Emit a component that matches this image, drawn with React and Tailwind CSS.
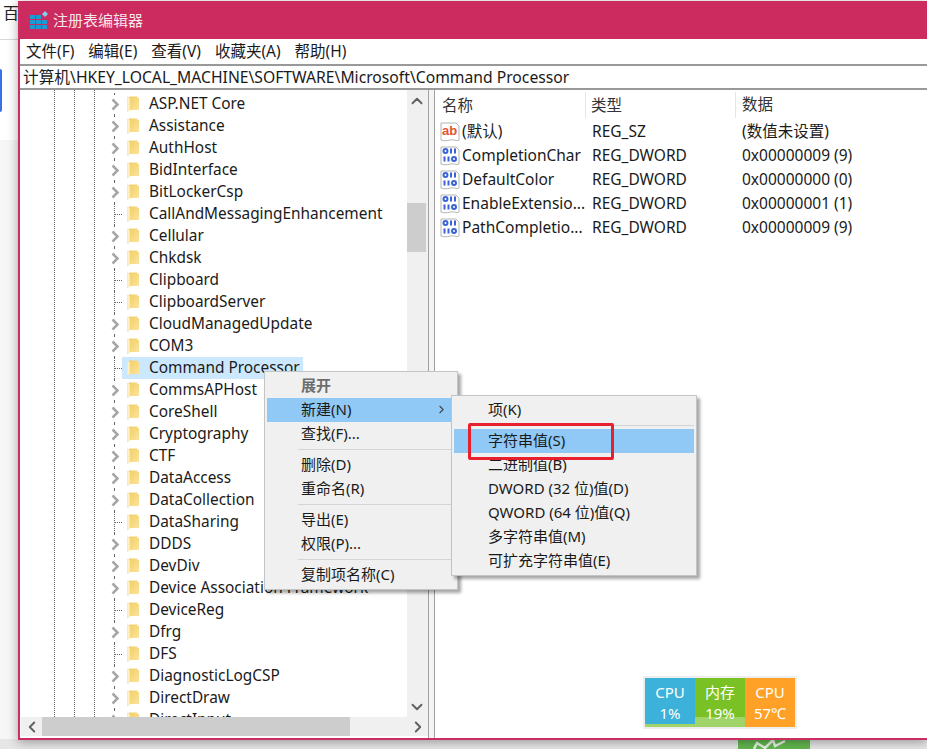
import { ChevronRight, ChevronLeft, ChevronUp, ChevronDown } from 'lucide-react';

const FONT = '"Noto Sans", "Noto Sans CJK SC", sans-serif';

const KEYS = ['ASP.NET Core', 'Assistance', 'AuthHost', 'BidInterface', 'BitLockerCsp', 'CallAndMessagingEnhancement', 'Cellular', 'Chkdsk', 'Clipboard', 'ClipboardServer', 'CloudManagedUpdate', 'COM3', 'Command Processor', 'CommsAPHost', 'CoreShell', 'Cryptography', 'CTF', 'DataAccess', 'DataCollection', 'DataSharing', 'DDDS', 'DevDiv', 'Device Association Framework', 'DeviceReg', 'Dfrg', 'DFS', 'DiagnosticLogCSP', 'DirectDraw', 'DirectInput'];
const LEAVES = ['CallAndMessagingEnhancement', 'Clipboard', 'ClipboardServer', 'Command Processor', 'DataSharing', 'DeviceReg', 'DFS'];

const VALUES = [
  { name: '(默认)', type: 'REG_SZ', data: '(数值未设置)', icon: 'sz' },
  { name: 'CompletionChar', type: 'REG_DWORD', data: '0x00000009 (9)' },
  { name: 'DefaultColor', type: 'REG_DWORD', data: '0x00000000 (0)' },
  { name: 'EnableExtensio...', type: 'REG_DWORD', data: '0x00000001 (1)' },
  { name: 'PathCompletio...', type: 'REG_DWORD', data: '0x00000009 (9)' },
];

const Folder = () => (
  <svg width="12" height="16" viewBox="0 0 12 16" className="shrink-0">
    <defs>
      <linearGradient id="folderBody" x1="0" y1="0" x2="1" y2="1">
        <stop offset="0" stopColor="#f3cd66" />
        <stop offset="1" stopColor="#fbe49a" />
      </linearGradient>
    </defs>
    <path d="M2 0.500h8.500v1.500h1.500v12H2z" fill="url(#folderBody)" />
    <path d="M0 1l3 1v12l-3 2z" fill="#fdf0c4" stroke="#ecd48c" strokeWidth="0.400" />
  </svg>
);

const RegIcon = ({ type }) => (
  <svg width="20" height="20" viewBox="0 0 20 20" className="shrink-0">
    <path d="M1 1h15l3 3v14c-3 1.500-5-1-9 0s-6 1-9 0z" fill="#fff" stroke="#b4b4b4" />
    {type === 'sz' ? (
      <text x="2" y="12.500" fontSize="13" fontWeight="700" fill="#e4532f" fontFamily="Liberation Sans, sans-serif">ab</text>
    ) : (
      <g fill="none" stroke="#3a62d8" strokeWidth="2">
        <circle cx="5.500" cy="5" r="2" />
        <path d="M11 2.500v5M15 2.500v5M4.500 10.500v5M8.500 10.500v5" />
        <circle cx="14" cy="13" r="2" />
      </g>
    )}
  </svg>
);

const TreeRow = ({ name }) => {
  const leaf = LEAVES.includes(name);
  const selected = name === 'Command Processor';
  return (
    <div className="flex h-[22px] items-center border-l border-dotted border-[#666]">
      {leaf ? (
        <div className="w-[7px] border-t border-dotted border-[#666]" />
      ) : (
        <div className="-ml-[7px] flex h-[18px] w-[14px] items-center justify-center bg-white">
          <svg width="9" height="13" viewBox="0 0 9 13">
            <path d="M1.500 1.500l5 5-5 5" fill="none" stroke="#a6a6a6" strokeWidth="2.500" />
          </svg>
        </div>
      )}
      <div className={`flex h-full items-center whitespace-nowrap pl-[5px] pr-[3px] ${selected ? 'bg-[#cce8ff]' : ''}`}>
        <Folder />
        <span className="ml-[10px] text-[15.400px] text-[#1a1a1a]">{name}</span>
      </div>
    </div>
  );
};

const MenuItem = ({ children, active, bold, arrow }) => (
  <div className={`relative flex h-[24px] items-center pb-px pl-[34px] text-[15px] ${active ? 'bg-[#90c8f6]' : ''} ${bold ? 'font-bold text-[#6d6d6d]' : 'text-[#1a1a1a]'}`}>
    {children}
    {arrow && <ChevronRight size={13} className="absolute right-[7px] text-[#444]" />}
  </div>
);

const Sep = () => <div className="my-[3px] ml-[31px] h-px bg-[#d4d4d4]" />;

const App = () => (
  <div className="relative h-[749px] w-[927px] overflow-hidden bg-white" style={{ fontFamily: FONT }}>
    {/* page behind the window */}
    <div className="h-[40px] border-b border-[#d8d8d8] pl-[3px] pt-[1px] text-[16px] text-[#222]">百</div>
    <div className="h-[100px] pt-[29px]">
      <div className="h-[43px] w-[2px] rounded-r bg-[#3b6fe8]" />
    </div>
    <div className="absolute inset-x-0 bottom-0 top-[140px] bg-[#f6f6f6]" />
    <div className="absolute inset-x-0 bottom-0 h-[10px] bg-[#e6e6e6]" />
    <div className="absolute bottom-0 left-[738px] h-[10px] w-[72px] bg-[#62b84f]">
      <svg width="72" height="10" viewBox="0 0 72 10">
        <path d="M16 10l3-6 8 5 8-8 2 6 10-5" fill="none" stroke="#e6f3e0" strokeWidth="2.500" />
      </svg>
    </div>

    {/* registry editor window */}
    <div className="absolute bottom-[9px] left-[18px] right-0 top-[1px] flex flex-col border-b-2 border-l-2 border-[#cb2f61] bg-white shadow-[0_2px_10px_rgba(0,0,0,0.35)]">
      <div className="flex h-[38px] shrink-0 items-center bg-[#cb2b5e] pl-[9px] text-[15px] text-[#f6e6ec]">
        <svg width="20" height="20" viewBox="0 0 20 20">
          <path d="M1 5h5v4H1zM7 5h5v4H7zM1 10h5v4H1zM7 10h5v4H7zM13 10h5v4h-5zM1 15h5v4H1zM7 15h5v4H7zM13 15h5v4h-5z" fill="#1c9ad6" />
          <path d="M13 4l3-3 3 3-3 3z" fill="#7fd0f0" />
        </svg>
        <span className="ml-[4px]">注册表编辑器</span>
      </div>
      <div className="flex h-[25px] shrink-0 items-center gap-[14px] pl-[6px] text-[15.500px] text-[#1a1a1a]">
        {['文件(F)', '编辑(E)', '查看(V)', '收藏夹(A)', '帮助(H)'].map((m) => <span key={m}>{m}</span>)}
      </div>
      <div className="flex h-[26px] shrink-0 items-center border-y-2 border-[#999] pl-[3px] pt-px text-[15.700px] text-[#1a1a1a]">
        计算机\HKEY_LOCAL_MACHINE\SOFTWARE\Microsoft\Command Processor
      </div>
      <div className="flex min-h-0 flex-1">
        {/* tree pane */}
        <div className="flex w-[408px] shrink-0 flex-col">
          <div className="flex min-h-0 flex-1">
            <div className="flex min-w-0 flex-1 overflow-hidden pl-[34px]">
              <div className="w-[20px] shrink-0 border-l border-dotted border-[#666]" />
              <div className="w-[20px] shrink-0 border-l border-dotted border-[#666]" />
              <div className="w-[20px] shrink-0 border-l border-dotted border-[#666]" />
              <div className="min-w-0 flex-1 pt-[3px]">
                {KEYS.map((k) => <TreeRow key={k} name={k} />)}
              </div>
            </div>
            <div className="flex w-[21px] shrink-0 flex-col bg-[#f0f0f0] pr-[2px]">
              <div className="flex h-[21px] items-center justify-center"><ChevronUp size={18} strokeWidth={2.500} className="text-[#606060]" /></div>
              <div className="mt-[92px] h-[49px] bg-[#cdcdcd]" />
              <div className="flex-1" />
              <div className="flex h-[21px] items-center justify-center"><ChevronDown size={18} strokeWidth={2.500} className="text-[#606060]" /></div>
            </div>
          </div>
          <div className="flex shrink-0 pb-[2px] pl-px">
            <div className="flex h-[19px] flex-1 items-center bg-[#f0f0f0]">
              <div className="flex w-[21px] justify-center"><ChevronLeft size={18} strokeWidth={2.500} className="text-[#606060]" /></div>
              <div className="h-full w-[308px] bg-[#cdcdcd]" />
              <div className="flex-1" />
              <div className="flex w-[21px] justify-center"><ChevronRight size={18} strokeWidth={2.500} className="text-[#606060]" /></div>
            </div>
          </div>
        </div>
        {/* splitter */}
        <div className="w-[7px] shrink-0 border-x border-[#a0a0a0] bg-[#f4f4f4]" />
        {/* value pane */}
        <div className="min-w-0 flex-1 text-[15.500px] text-[#1a1a1a]">
          <div className="mb-[2px] mt-[2px] flex h-[26px] items-center text-[#333]">
            <div className="h-full w-[151px] border-r border-[#e5e5e5] pl-[7px] leading-[26px]">名称</div>
            <div className="h-full w-[150px] border-r border-[#e5e5e5] pl-[5px] leading-[26px]">类型</div>
            <div className="pl-[6px]">数据</div>
          </div>
          {VALUES.map((v) => (
            <div key={v.name} className="flex h-[24px] items-center">
              <div className="flex w-[151px] items-center pl-[5px]">
                <RegIcon type={v.icon} />
                <span className="ml-[2px] whitespace-nowrap">{v.name}</span>
              </div>
              <div className="w-[150px] pl-[6px]">{v.type}</div>
              <div className="pl-[6px]">{v.data}</div>
            </div>
          ))}
        </div>
      </div>
    </div>

    {/* context menu */}
    <div className="absolute left-[264px] top-[371px] w-[194px] border border-[#c4c4c4] bg-[#f0f0f0] p-[2px] shadow-[3px_3px_3px_rgba(0,0,0,0.35)]">
      <MenuItem bold>展开</MenuItem>
      <MenuItem active arrow>新建(N)</MenuItem>
      <MenuItem>查找(F)...</MenuItem>
      <Sep />
      <MenuItem>删除(D)</MenuItem>
      <MenuItem>重命名(R)</MenuItem>
      <Sep />
      <MenuItem>导出(E)</MenuItem>
      <MenuItem>权限(P)...</MenuItem>
      <Sep />
      <MenuItem>复制项名称(C)</MenuItem>
    </div>

    {/* submenu */}
    <div className="absolute left-[451px] top-[395px] w-[246px] border border-[#c4c4c4] bg-[#f0f0f0] p-[2px] shadow-[3px_3px_3px_rgba(0,0,0,0.35)]">
      <MenuItem>项(K)</MenuItem>
      <Sep />
      <MenuItem active>字符串值(S)</MenuItem>
      <MenuItem>二进制值(B)</MenuItem>
      <MenuItem>DWORD (32 位)值(D)</MenuItem>
      <MenuItem>QWORD (64 位)值(Q)</MenuItem>
      <MenuItem>多字符串值(M)</MenuItem>
      <MenuItem>可扩充字符串值(E)</MenuItem>
    </div>

    {/* annotation */}
    <div className="absolute left-[468px] top-[423px] h-[37px] w-[146px] rounded-[2px] border-[3px] border-[#e8202e]" />

    {/* system monitor widget */}
    <div className="absolute left-[643px] top-[676px] flex border-2 border-[#eeeeee] text-center text-[15px] leading-[21px] text-white">
      <div className="relative h-[49px] w-[50px] bg-[#3cb1d9] pt-[4px]">
        <div className="absolute inset-x-0 bottom-0 h-[3px] bg-[#a0d468]" />
        <div className="relative">CPU<br />1%</div>
      </div>
      <div className="relative h-[49px] w-[50px] bg-[#7ac126] pt-[4px]">
        <div className="absolute inset-x-0 bottom-0 h-[10px] bg-[#a0d468]" />
        <div className="relative">内存<br />19%</div>
      </div>
      <div className="h-[49px] w-[50px] bg-[#ffa126] pt-[4px]">CPU<br />57℃</div>
    </div>
  </div>
);

export default App;
